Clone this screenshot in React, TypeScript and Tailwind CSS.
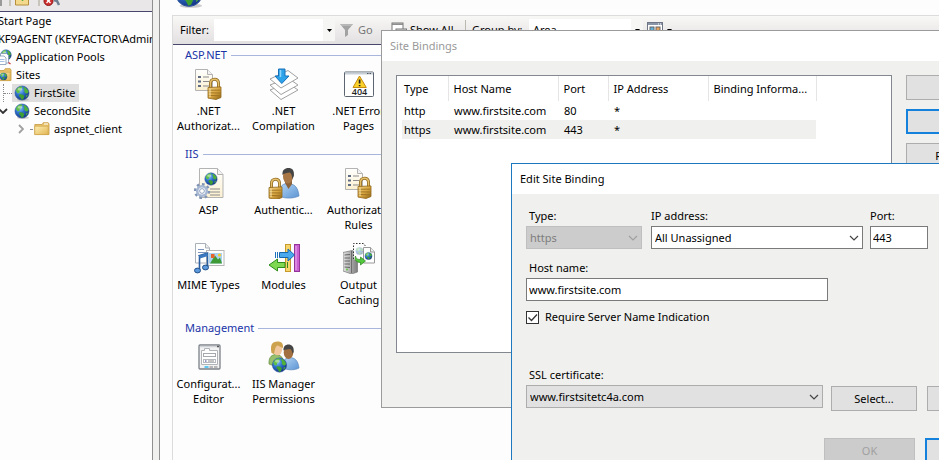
import React from "react";

type IconProps = { className?: string };

/* Shared gradients used by every drawing on the page */
function Gradients() {
  return (
    <svg width="0" height="0" className="absolute" aria-hidden="true">
      <defs>
        <radialGradient id="sea" cx="0.35" cy="0.3" r="0.75">
          <stop offset="0" stopColor="#8fc8f4" />
          <stop offset="0.45" stopColor="#2f74cf" />
          <stop offset="1" stopColor="#12307f" />
        </radialGradient>
        <linearGradient id="gold" x1="0" y1="0" x2="1" y2="1">
          <stop offset="0" stopColor="#f3d58a" />
          <stop offset="0.5" stopColor="#d9a640" />
          <stop offset="1" stopColor="#8f6518" />
        </linearGradient>
        <linearGradient id="folder" x1="0" y1="0" x2="1" y2="1">
          <stop offset="0" stopColor="#fdeeb4" />
          <stop offset="1" stopColor="#e2b654" />
        </linearGradient>
        <linearGradient id="paper" x1="0" y1="0" x2="0" y2="1">
          <stop offset="0" stopColor="#ffffff" />
          <stop offset="1" stopColor="#fbf0cf" />
        </linearGradient>
        <linearGradient id="blueShirt" x1="0" y1="0" x2="1" y2="1">
          <stop offset="0" stopColor="#b5d5f5" />
          <stop offset="1" stopColor="#5b95d3" />
        </linearGradient>
        <linearGradient id="steel" x1="0" y1="0" x2="1" y2="0">
          <stop offset="0" stopColor="#e2e2e2" />
          <stop offset="1" stopColor="#7d7d7d" />
        </linearGradient>
      </defs>
    </svg>
  );
}

function GlobeShape({ cx, cy, r }: { cx: number; cy: number; r: number }) {
  return (
    <g transform={`translate(${cx - r} ${cy - r}) scale(${r / 8})`}>
      <circle cx="8" cy="8" r="7.6" fill="url(#sea)" stroke="#27509c" strokeWidth="0.6" />
      <path d="M1.4 5.4C2.6 2.8 5 1 7.4.8l1.2 1.4-1.6 1 .4 1.6-2 1.2-.2 2-2.2.4z" fill="#5fbf46" />
      <path d="M10.2 1.4c2.4.8 4.4 3 4.9 5.4l-1.3 1.8-2-.4-1.6-2 .6-1.8-1.2-1.4z" fill="#4fb03a" />
      <path d="M5.6 9.2l3.4.6 1.6 1.8-1.4 3.2-1.6.6-1.4-2.8-1.6-1.4z" fill="#3f9f30" />
      <path d="M12.6 10.4l1.8-.4c-.6 1.6-1.4 2.6-2.4 3.4z" fill="#4fb03a" />
      <ellipse cx="5.8" cy="4" rx="2.6" ry="1.5" fill="#fff" opacity="0.45" />
    </g>
  );
}

function GlobeIcon({ className }: IconProps) {
  return (
    <svg viewBox="0 0 16 16" className={className} aria-hidden="true">
      <ellipse cx="9" cy="14.8" rx="6" ry="1.1" fill="#999" opacity="0.5" />
      <GlobeShape cx={8} cy={8} r={7.4} />
    </svg>
  );
}

function FolderIcon({ className }: IconProps) {
  return (
    <svg viewBox="0 0 16 16" className={className} aria-hidden="true">
      <path d="M.8 3.5h7.4l1-1.8h5l.8 1.3v10.5H.8z" fill="#e9c36a" stroke="#c79b41" strokeWidth="0.8" />
      <path d="M10 3h4" stroke="#fff" />
      <path d="M.8 5.2h13.4v8.4H.8z" fill="url(#folder)" stroke="#cfa54b" strokeWidth="0.7" />
    </svg>
  );
}

function SitesIcon({ className }: IconProps) {
  return (
    <svg viewBox="0 0 16 16" className={className} aria-hidden="true">
      <path d="M.8 3.5h7.4l1-1.8h5l.8 1.3v10.5H.8z" fill="#e9c36a" stroke="#c79b41" strokeWidth="0.8" />
      <path d="M.8 5.2h13.4v8.4H.8z" fill="url(#folder)" stroke="#cfa54b" strokeWidth="0.7" />
      <GlobeShape cx={7.5} cy={9.5} r={3.8} />
    </svg>
  );
}

function PoolsIcon({ className }: IconProps) {
  return (
    <svg viewBox="0 0 16 16" className={className} aria-hidden="true">
      <GlobeShape cx={10} cy={6} r={5.6} />
      <path d="M4.5 4.5h6l2 2V14h-8z" fill="#fff" stroke="#7f97b5" strokeWidth="0.8" />
      <path d="M2 7h6l2 2v6.5H2z" fill="#fff" stroke="#7f97b5" strokeWidth="0.8" />
      <path d="M3.5 10.5h5M3.5 12.5h5" stroke="#8fb1dc" strokeWidth="0.8" />
      <path d="M12.5 13.5l2 1.4" stroke="#c33" strokeWidth="1.2" />
    </svg>
  );
}

function Padlock({ x, y }: { x: number; y: number }) {
  return (
    <g transform={`translate(${x} ${y})`}>
      <path d="M3.5 10V5.5C3.5 2.6 5 1.2 7.5 1.2s4 1.4 4 4.3V10" fill="none" stroke="#8f6a22" strokeWidth="3" />
      <path d="M3.5 10V5.5C3.5 2.6 5 1.2 7.5 1.2s4 1.4 4 4.3V10" fill="none" stroke="#e5c06a" strokeWidth="1.4" />
      <path d="M1 9.5l13-.6v10.6l-5 2-8-1.4z" fill="url(#gold)" stroke="#8f6518" strokeWidth="0.8" />
      <path d="M1.5 12.3l12-.2M1.5 14.8l12 .2M1.5 17.4l11.6.4" stroke="#9b7021" strokeWidth="0.9" />
      <path d="M3 11v8" stroke="#fbe7b0" strokeWidth="1" />
    </g>
  );
}

function RulesLockIcon({ className }: IconProps) {
  return (
    <svg viewBox="0 0 32 32" className={className} aria-hidden="true">
      <path d="M2.5 1.5h12l5 5v16h-17z" fill="url(#paper)" stroke="#b3b3b3" />
      <path d="M14.5 1.5v5h5" fill="#f2f2f2" stroke="#b3b3b3" />
      <path d="M5 9h3M5 13.500h3M5 18h3" stroke="#5d6b85" strokeWidth="2" />
      <path d="M10 9h6M10 13.500h6M10 18h6" stroke="#8b8b8b" />
      <Padlock x={14} y={10} />
    </svg>
  );
}

function CompilationIcon({ className }: IconProps) {
  return (
    <svg viewBox="0 0 32 32" className={className} aria-hidden="true">
      <g fill="#fff" stroke="#a0a0a0" strokeLinejoin="round">
        <path d="M2 22l18-7 10 7-17 9.500z" />
        <path d="M2 17l18-7 10 7-17 9.500z" />
        <path d="M2 11l18-8.500 10 7.500-17 10z" />
      </g>
      <path d="M10.500 1h6.500v7h4l-7.200 7.500L7 8h3.500z" fill="#2fa3ea" stroke="#1670b8" />
      <path d="M12.500 2v7" stroke="#8fd4fb" strokeWidth="1.500" />
    </svg>
  );
}

function ErrorPagesIcon({ className }: IconProps) {
  return (
    <svg viewBox="0 0 32 32" className={className} aria-hidden="true">
      <rect x="1.500" y="4" width="29" height="24.500" rx="1" fill="#fff" stroke="#5d6670" />
      <path d="M2 5.500h28" stroke="#c6ced8" strokeWidth="2" />
      <path d="M24 5.500h1.500M26.500 5.500H28" stroke="#4b5563" />
      <path d="M16.500 8l6.800 11.500H10z" fill="#fbd12b" stroke="#c58b10" strokeLinejoin="round" />
      <path d="M16.600 11.500v4M16.600 17v1.300" stroke="#222" strokeWidth="1.700" />
      <text x="16.500" y="27" textAnchor="middle" fontSize="9" fontWeight="600" fill="#222" className="font-['Open_Sans','Noto_Sans',sans-serif]">404</text>
    </svg>
  );
}

function AspIcon({ className }: IconProps) {
  return (
    <svg viewBox="0 0 32 32" className={className} aria-hidden="true">
      <path d="M6.500 1.500h18l5.500 6v23H6.500z" fill="url(#paper)" stroke="#b3b3b3" />
      <path d="M24.500 1.500v6H30" fill="#f1f1f1" stroke="#b3b3b3" />
      <GlobeShape cx={18} cy={12} r={6.5} />
      <path d="M17 22h10M17 25h10M17 28h10" stroke="#8a8a8a" />
      <circle cx="9" cy="24" r="6.800" fill="none" stroke="#8093b5" strokeWidth="2.600" strokeDasharray="2.600 2.700" />
      <circle cx="9" cy="24" r="4.800" fill="#fff" stroke="#a6b7d3" strokeWidth="2.600" />
      <circle cx="9" cy="24" r="2.400" fill="#fff" stroke="#7589ad" strokeWidth="0.800" />
    </svg>
  );
}

function AuthenticationIcon({ className }: IconProps) {
  return (
    <svg viewBox="0 0 32 32" className={className} aria-hidden="true">
      <path d="M11 29c0-8 2-12 8-12.500 7 0 11 3 12 12.500-5 2.500-14 3-20 0z" fill="url(#blueShirt)" stroke="#5a87bd" strokeWidth="0.700" />
      <path d="M17 16l3.500 6 3.500-5v-4h-7z" fill="#8e6238" />
      <ellipse cx="20" cy="9.500" rx="5" ry="7" fill="#a87745" />
      <path d="M14.500 8c-.5-5 2.300-7 6-7s6 2.300 5.400 8l-1.600 3.200c-.2-3-.6-5-2.400-6.700-3 .6-5.500.5-7.400 2.500z" fill="#454545" />
      <Padlock x={0} y={11} />
    </svg>
  );
}

function MimeIcon({ className }: IconProps) {
  return (
    <svg viewBox="0 0 32 32" className={className} aria-hidden="true">
      <path d="M2.500 1.500h10l4 4.500v15h-14z" fill="#fff" stroke="#a8b0ba" />
      <path d="M12.500 1.500V6h4" fill="#eee" stroke="#a8b0ba" />
      <path d="M5 7.500h6M5 10.500h8M5 13.500h6" stroke="#7e96be" />
      <rect x="13.500" y="8.500" width="17.500" height="15" fill="#fff" stroke="#b6b6b6" />
      <rect x="16" y="11" width="13" height="10.500" fill="#a9d1f2" />
      <path d="M17 21.500l5-8 3 4 2-2 2 6z" fill="#3d9a34" />
      <rect x="18" y="12" width="3.500" height="4" fill="#e6632a" />
      <circle cx="26.500" cy="13" r="1.600" fill="#f7c92c" />
      <path d="M6.500 28V13.500l8-2.500v14" fill="none" stroke="#2b5f9f" strokeWidth="1.600" />
      <path d="M6.500 15l8-2.500" stroke="#3a78c0" strokeWidth="3" />
      <ellipse cx="4.500" cy="28.500" rx="3" ry="2.400" fill="#5b98dc" stroke="#234f87" />
      <ellipse cx="12.500" cy="25.500" rx="3" ry="2.400" fill="#5b98dc" stroke="#234f87" />
    </svg>
  );
}

function ModulesIcon({ className }: IconProps) {
  return (
    <svg viewBox="0 0 32 32" className={className} aria-hidden="true">
      <rect x="17.500" y="2.500" width="5" height="27" fill="#f6d56d" stroke="#c79a2c" />
      <rect x="26.500" y="2.500" width="5" height="27" fill="#c95fd0" stroke="#93349b" />
      <path d="M28 4v24" stroke="#ebb3ef" />
      <path d="M11.500 10.500H20V7l6.500 6-6.500 6v-3.500h-8.500z" fill="#4aa9ee" stroke="#1767ad" />
      <path d="M7.500 10v6M9.500 10v6" stroke="#1c72bd" />
      <path d="M17 20.500H9.500V17L1 23l8.500 6v-3.500H17z" fill="#7ed852" stroke="#2f8d1e" />
      <path d="M19.500 20v6" stroke="#2f8d1e" />
    </svg>
  );
}

function CachingIcon({ className }: IconProps) {
  return (
    <svg viewBox="0 0 32 32" className={className} aria-hidden="true">
      <path d="M0 10.500l9-2 5.500 1.500v20l-6 2L0 29z" fill="url(#steel)" stroke="#777" strokeWidth="0.700" />
      <path d="M1.500 13l5.500-.5M1.500 16H7M1.500 19H7M1.500 22H7M1.500 25l5.500.5" stroke="#666" />
      <path d="M8.500 9v22" stroke="#6d6d6d" />
      <circle cx="4" cy="27.500" r="1" fill="#66cc44" />
      <path d="M10.500 17V1.500h10l3 4v15h-6" fill="#fff" stroke="#333" strokeDasharray="1.500 1.500" />
      <GlobeShape cx={16.5} cy={9} r={3.8} />
      <circle cx="16.500" cy="9" r="4.200" fill="#fff" opacity="0.600" />
      <path d="M20.500 5.500h7l4 4.500v11h-11z" fill="#fff" stroke="#999" />
      <path d="M27.500 5.500V10h4" fill="#eee" stroke="#999" />
      <GlobeShape cx={25.5} cy={14} r={3.8} />
      <path d="M12.500 14c0 3 3 3.500 5 3.500V15l5 4-5 4v-2.500c-4 0-6.500-2.500-5-6.500z" fill="#52c83c" stroke="#2c8220" strokeWidth="0.700" />
    </svg>
  );
}

function ConfigurationIcon({ className }: IconProps) {
  return (
    <svg viewBox="0 0 32 32" className={className} aria-hidden="true">
      <rect x="6" y="4" width="21" height="24" rx="1" fill="#f2f2f2" stroke="#7c8188" strokeWidth="1.300" />
      <path d="M7 5.500h19" stroke="#cfd2d6" strokeWidth="1.500" />
      <path d="M24 5.500h2" stroke="#555" strokeWidth="1.500" />
      <path d="M8.500 9.500h3v-2h5v2h8v14h-16z" fill="#fff" stroke="#b0b4b8" />
      <rect x="10.500" y="12.500" width="12" height="3" fill="#fff" stroke="#a5a9ad" />
      <rect x="10.500" y="18.500" width="12" height="3" fill="#fff" stroke="#b5b9bd" />
      <path d="M12 20h1.500" stroke="#338" />
      <path d="M15 20h6" stroke="#888" />
      <path d="M11.500 26h4" stroke="#27b7f0" strokeWidth="1.500" />
      <path d="M16.500 26h3.500M21 26h3.500" stroke="#a3a3a3" strokeWidth="1.500" />
    </svg>
  );
}

function PermissionsIcon({ className }: IconProps) {
  return (
    <svg viewBox="0 0 32 32" className={className} aria-hidden="true">
      <path d="M15 27c0-7 1.500-10 6-10.500 6 0 9 3 10 10.500-4 2.300-11 2.500-16 0z" fill="url(#blueShirt)" stroke="#5a87bd" strokeWidth="0.700" />
      <ellipse cx="20.500" cy="11.500" rx="4.800" ry="6.500" fill="#a27040" />
      <path d="M15.500 9.500c-.4-4 2-6 5-6s5.800 2 5.200 7.500l-1.200 2c-.3-2.500-.8-4-2.200-5-2.600.5-5 .3-6.800 1.500z" fill="#454545" />
      <path d="M1 23c-.2-6 1.500-8.500 6-9.500 4 0 7 1.500 8 5v5c-5 2-10 1.500-14-.500z" fill="#96c06c" stroke="#5e8a3b" strokeWidth="0.700" />
      <ellipse cx="9.500" cy="8" rx="4.800" ry="6.300" fill="#f0c79c" />
      <path d="M3.500 12C2 4 4 .5 9.500.5c4 0 6 2 5.500 6.500-2-.8-4.500-2.400-6-2.400-2 1.400-2.200 5-3 8.400z" fill="#cda24e" />
      <GlobeShape cx={11.5} cy={24} r={7.5} />
    </svg>
  );
}

function ChevronDown({ className }: IconProps) {
  return (
    <svg viewBox="0 0 10 6" className={className} fill="none" stroke="currentColor" strokeWidth="1.200" aria-hidden="true">
      <path d="M1 1l4 4 4-4" />
    </svg>
  );
}

function TreeChevron({ className }: IconProps) {
  return (
    <svg viewBox="0 0 10 6" className={className} fill="none" stroke="currentColor" strokeWidth="1.800" aria-hidden="true">
      <path d="M1 1l4 4 4-4" />
    </svg>
  );
}

function DropArrow() {
  return (
    <svg viewBox="0 0 5 3" className="h-[3px] w-[5px] shrink-0" aria-hidden="true">
      <path d="M0 0h5L2.500 3z" fill="#000" />
    </svg>
  );
}

function ShowAllIcon({ className }: IconProps) {
  return (
    <svg viewBox="0 0 16 16" className={className} aria-hidden="true">
      <rect x="1" y="1" width="11" height="9" fill="#fff" stroke="#777" />
      <path d="M1 2.200h11" stroke="#888" strokeWidth="1.500" />
      <rect x="5" y="7" width="10.500" height="7" fill="#ddd" stroke="#777" />
    </svg>
  );
}

function ViewIcon({ className }: IconProps) {
  return (
    <svg viewBox="0 0 16 16" className={className} aria-hidden="true">
      <rect x="0.500" y="0.500" width="15" height="14" fill="#fff" stroke="#6f7787" />
      <path d="M1 2h14" stroke="#8b95a8" strokeWidth="2" />
      <path d="M11 2h1M13 2h1" stroke="#fff" />
      <rect x="3" y="5" width="4" height="4" fill="#5fb0d8" stroke="#666" />
      <rect x="9" y="5" width="4" height="4" fill="#e8a15b" stroke="#666" />
    </svg>
  );
}

/* Left pane */

type Node = {
  label: string;
  indent: string;
  icon?: React.ReactNode;
  lead?: React.ReactNode;
  selected?: boolean;
};

const dots = <span className="h-px grow border-t border-dotted border-[#8a8a8a]" />;

const nodes: Node[] = [
  { label: "Start Page", indent: "-ml-2" },
  { label: "KF9AGENT (KEYFACTOR\\Administrator)", indent: "-ml-2" },
  { label: "Application Pools", indent: "-ml-1.5", icon: <PoolsIcon className="size-4" /> },
  { label: "Sites", indent: "-ml-1.5", icon: <SitesIcon className="size-4" /> },
  {
    label: "FirstSite",
    indent: "pl-[3px]",
    selected: true,
    icon: <GlobeIcon className="size-4" />,
    lead: (
      <span className="flex h-full w-[9px] items-center border-l border-dotted border-[#8a8a8a]">{dots}</span>
    ),
  },
  {
    label: "SecondSite",
    indent: "pl-0",
    icon: <GlobeIcon className="size-4" />,
    lead: (
      <span className="flex w-3 items-center gap-1">
        <TreeChevron className="-ml-0.5 h-[6px] w-[10px] shrink-0 text-[#333]" />
        {dots}
      </span>
    ),
  },
  {
    label: "aspnet_client",
    indent: "pl-4",
    icon: <FolderIcon className="size-4" />,
    lead: (
      <span className="flex w-4 items-center gap-1">
        <TreeChevron className="h-[6px] w-[10px] shrink-0 -rotate-90 text-[#a0a0a0]" />
        {dots}
      </span>
    ),
  },
];

function ConnectionsPane() {
  return (
    <nav aria-label="Connections" className="flex w-[152px] shrink-0 flex-col overflow-hidden bg-[#fdfdfd]">
      <div className="flex h-3 shrink-0 items-end border-b border-[#47476e] bg-[#e9e7e7] pb-1">
        <svg viewBox="0 0 64 8" className="h-2 w-16 shrink-0" aria-hidden="true">
          <path d="M0 0h2v7H0z" fill="#999" />
          <path d="M10 0v7M39 0v7" stroke="#bcb9ae" strokeWidth="1.500" />
          <path d="M15.500 0h13v6h-13z" fill="#f4d98d" stroke="#b58f3c" />
          <path d="M20 0h5l-2.500 2z" fill="#3a9c35" />
          <circle cx="48.500" cy="2" r="4.500" fill="#cf2f2f" stroke="#8f1717" />
          <path d="M46.500 0l4 4M50.500 0l-4 4" stroke="#fff" strokeWidth="1.300" />
          <path d="M54 1l3 1 2 4" fill="none" stroke="#6f7f92" strokeWidth="2.500" />
        </svg>
      </div>
      <ul>
        {nodes.map((n) => (
          <li key={n.label} className={`flex h-[18px] items-center whitespace-nowrap ${n.indent}`}>
            {n.lead}
            <span className={`flex h-[18px] items-center px-0.5 ${n.selected ? "bg-[#dedede] pr-1" : ""}`}>
              {n.icon}
              <span className="pl-1">{n.label}</span>
            </span>
          </li>
        ))}
      </ul>
    </nav>
  );
}

/* Feature view */

type Feature = { lines: [string, string?]; icon: React.ReactNode };

const groups: { title: string; items: Feature[] }[] = [
  {
    title: "ASP.NET",
    items: [
      { lines: [".NET", "Authorizat..."], icon: <RulesLockIcon className="size-8" /> },
      { lines: [".NET", "Compilation"], icon: <CompilationIcon className="size-8" /> },
      { lines: [".NET Error", "Pages"], icon: <ErrorPagesIcon className="size-8" /> },
    ],
  },
  {
    title: "IIS",
    items: [
      { lines: ["ASP"], icon: <AspIcon className="size-8" /> },
      { lines: ["Authentic..."], icon: <AuthenticationIcon className="size-8" /> },
      { lines: ["Authorizat...", "Rules"], icon: <RulesLockIcon className="size-8" /> },
      { lines: ["MIME Types"], icon: <MimeIcon className="size-8" /> },
      { lines: ["Modules"], icon: <ModulesIcon className="size-8" /> },
      { lines: ["Output", "Caching"], icon: <CachingIcon className="size-8" /> },
    ],
  },
  {
    title: "Management",
    items: [
      { lines: ["Configurat...", "Editor"], icon: <ConfigurationIcon className="size-8" /> },
      { lines: ["IIS Manager", "Permissions"], icon: <PermissionsIcon className="size-8" /> },
    ],
  },
];

function FeatureToolbar() {
  return (
    <div className="flex h-[29px] shrink-0 items-center border-b border-[#47476e] bg-linear-to-b from-[#f8f8f6] to-[#e2dfe0] pl-[7px]">
      <label htmlFor="filter" className="w-[34px]">Filter:</label>
      <div className="flex h-[22px] w-[121px] items-center bg-white">
        <input id="filter" className="h-full w-0 grow bg-transparent px-1 outline-none" />
        <button aria-label="Filter history" className="flex h-full w-3 items-center justify-center bg-[#f6f6f5]">
          <DropArrow />
        </button>
      </div>
      <button className="ml-1 flex w-[52px] items-center gap-[3px] text-[#777]">
        <svg viewBox="0 0 16 16" className="size-4" aria-hidden="true">
          <path d="M1 2h13l-5 6v5l-3 2V8z" fill="#a2a2a2" />
          <path d="M2 3h11" stroke="#ccc" />
        </svg>
        Go
      </button>
      <button className="flex w-[74px] items-center gap-[3px] whitespace-nowrap">
        <ShowAllIcon className="size-4 shrink-0" />
        Show All
      </button>
      <span className="h-5 border-l border-[#bcb9ae]" />
      <label htmlFor="group" className="w-[63px] pl-1.5 whitespace-nowrap">Group by:</label>
      <div className="flex h-[22px] w-[114px] items-center bg-white">
        <select id="group" className="h-full w-0 grow appearance-none bg-transparent pl-1 outline-none">
          <option>Area</option>
        </select>
        <span className="flex h-full w-3 items-center justify-center bg-[#f6f6f5]"><DropArrow /></span>
      </div>
      <button aria-label="View" className="ml-1 flex items-center gap-1">
        <ViewIcon className="size-4" />
        <DropArrow />
      </button>
    </div>
  );
}

function FeatureView() {
  return (
    <main className="flex min-w-0 grow flex-col overflow-hidden bg-[#fdfdfd] pl-3">
      <div className="flex h-[15px] shrink-0 items-end overflow-hidden pb-[7px]">
        <GlobeIcon className="ml-0.5 size-[30px] shrink-0" />
      </div>
      <section aria-label="Features" className="flex min-w-[767px] grow flex-col border-t border-l border-[#dcdcdc]">
        <FeatureToolbar />
        {groups.map((g) => (
          <div key={g.title} className="mb-1">
            <h2 className="flex h-5 items-center gap-1 pl-3 text-[#1a34a8]">
              {g.title}
              <span className="h-px grow bg-[#a9b6dc]" />
            </h2>
            <ul className="grid grid-cols-[repeat(3,75px)]">
              {g.items.map((f) => (
                <li key={f.lines.join(" ")} className="flex h-[75px] flex-col items-center pt-[3px] pr-1">
                  {f.icon}
                  <span className="mt-[3px] text-center leading-[15px] whitespace-nowrap">
                    {f.lines[0]}
                    {f.lines[1] && (
                      <>
                        <br />
                        {f.lines[1]}
                      </>
                    )}
                  </span>
                </li>
              ))}
            </ul>
          </div>
        ))}
      </section>
    </main>
  );
}

/* Dialogs */

const sideButton = "h-[25px] w-[100px] border border-[#adadad] bg-[#e1e1e1]";
const primaryButton = "h-[25px] w-[100px] border-2 border-[#1482dc] bg-[#e1e1e1]";

function SiteBindingsDialog() {
  return (
    <div
      role="dialog"
      aria-labelledby="bindings-title"
      className="absolute top-[30px] left-[381px] w-[650px] border border-[#9b9b9b] bg-[#f0f0ee]"
    >
      <h1 id="bindings-title" className="flex h-[30px] items-center bg-white pl-2 text-[#999]">Site Bindings</h1>
      <div className="flex gap-3.5 pt-3.5 pb-[54px] pl-3.5">
        <div className="h-[278px] w-[496px] border border-[#828790] bg-white pl-[5px]">
          <table className="w-[414px] table-fixed border-collapse text-left">
            <colgroup>
              <col className="w-[46px]" />
              <col className="w-[110px]" />
              <col className="w-[50px]" />
              <col className="w-[100px]" />
              <col className="w-[108px]" />
            </colgroup>
            <thead>
              <tr className="h-[25px]">
                {["Type", "Host Name", "Port", "IP Address", "Binding Informa..."].map((h, i) => (
                  <th
                    key={h}
                    className={`border-r border-[#e5e5e5] p-0 font-normal whitespace-nowrap ${i === 0 ? "pl-0.5" : "pl-[5px]"}`}
                  >
                    {h}
                  </th>
                ))}
              </tr>
            </thead>
            <tbody>
              {[
                ["http", "www.firstsite.com", "80", "*", ""],
                ["https", "www.firstsite.com", "443", "*", ""],
              ].map((row, r) => (
                <tr key={row[0]} className={`h-[19px] ${r === 1 ? "bg-[#f0f0ee]" : ""}`}>
                  {row.map((c, i) => (
                    <td key={i} className={`p-0 ${i === 0 ? "pl-0.5" : "pl-1.5"}`}>{c}</td>
                  ))}
                </tr>
              ))}
            </tbody>
          </table>
        </div>
        <div className="flex flex-col gap-[9px]">
          <button className={sideButton}>Add...</button>
          <button className={primaryButton}>Edit...</button>
          <button className={sideButton}>Remove</button>
        </div>
      </div>
    </div>
  );
}

type ComboProps = {
  id: string;
  value: string;
  look: string;
  arrow?: string;
  disabled?: boolean;
};

function Combo({ id, value, look, arrow = "text-[#444]", disabled }: ComboProps) {
  return (
    <div className="relative">
      <select
        id={id}
        disabled={disabled}
        className={`h-[23px] w-full appearance-none border pl-[3px] outline-none disabled:opacity-100 ${look}`}
      >
        <option>{value}</option>
      </select>
      <ChevronDown className={`pointer-events-none absolute top-[9px] right-1 h-[6px] w-[10px] ${arrow}`} />
    </div>
  );
}

function EditBindingDialog() {
  const label = "block h-[19px] leading-[18px]";
  const field = "h-[23px] w-full border border-[#7a7a7a] bg-white px-0.5 outline-none";
  return (
    <div
      role="dialog"
      aria-labelledby="edit-title"
      className="absolute top-[163px] left-[511px] w-[520px] border border-[#1c78c0] bg-[#f0f0ee]"
    >
      <h1 id="edit-title" className="flex h-[30px] items-center bg-white pl-2">Edit Site Binding</h1>
      <form className="px-3.5 pt-[13px] pb-4" onSubmit={(e) => e.preventDefault()}>
        <div className="flex">
          <div className="mr-[9px] w-[116px]">
            <label htmlFor="type" className={`${label} pl-[3px]`}>Type:</label>
            <Combo id="type" value="https" disabled look="border-[#bfbfbf] bg-[#cccccc] text-[#7d7d7d]" arrow="text-[#a0a0a0]" />
          </div>
          <div className="mr-[7px] w-[212px]">
            <label htmlFor="ip" className={label}>IP address:</label>
            <Combo id="ip" value="All Unassigned" look="border-[#7a7a7a] bg-white" />
          </div>
          <div className="w-[58px]">
            <label htmlFor="port" className={label}>Port:</label>
            <input id="port" defaultValue="443" className={field} />
          </div>
        </div>
        <div className="mt-2.5 w-[302px]">
          <label htmlFor="host" className={`${label} pl-[3px]`}>Host name:</label>
          <input id="host" defaultValue="www.firstsite.com" className={field} />
        </div>
        <div className="mt-1.5 flex h-5 items-center gap-1.5">
          <span className="relative size-[13px]">
            <input id="sni" type="checkbox" defaultChecked className="block size-[13px] appearance-none border border-[#333] bg-white" />
            <svg viewBox="0 0 13 13" className="pointer-events-none absolute inset-0 size-[13px]" fill="none" stroke="#333" strokeWidth="1.300" aria-hidden="true">
              <path d="M2.500 6.500l3 3 5.500-6" />
            </svg>
          </span>
          <label htmlFor="sni">Require Server Name Indication</label>
        </div>
        <div className="mt-[39px] flex items-end">
          <div className="mr-2 w-[297px]">
            <label htmlFor="ssl" className={`${label} pl-[3px]`}>SSL certificate:</label>
            <Combo id="ssl" value="www.firstsitetc4a.com" look="border-[#adadad] bg-[#e1e1e1]" />
          </div>
          <button className="mr-2.5 -mb-[3px] h-[25px] w-[86px] border border-[#adadad] bg-[#e1e1e1]">Select...</button>
          <button className="-mb-[3px] h-[25px] w-[86px] border border-[#adadad] bg-[#e1e1e1]">View...</button>
        </div>
        <div className="mt-[30px] flex gap-2.5 pl-[298px]">
          <button disabled className="h-[25px] w-[91px] border border-[#bfbfbf] bg-[#cccccc] text-[#a0a0a0]">OK</button>
          <button className="h-[25px] w-[91px] border-2 border-[#1482dc] bg-[#e1e1e1]">Cancel</button>
        </div>
      </form>
    </div>
  );
}

export default function App() {
  return (
    <div className="relative flex h-screen overflow-hidden bg-[#fdfdfd] font-['Noto_Sans','Open_Sans',sans-serif] text-[11px] leading-4 text-black">
      <Gradients />
      <ConnectionsPane />
      <div className="w-2 shrink-0 border-x border-[#8f8f8f] bg-[#f0f0ee]" />
      <FeatureView />
      <SiteBindingsDialog />
      <EditBindingDialog />
    </div>
  );
}
